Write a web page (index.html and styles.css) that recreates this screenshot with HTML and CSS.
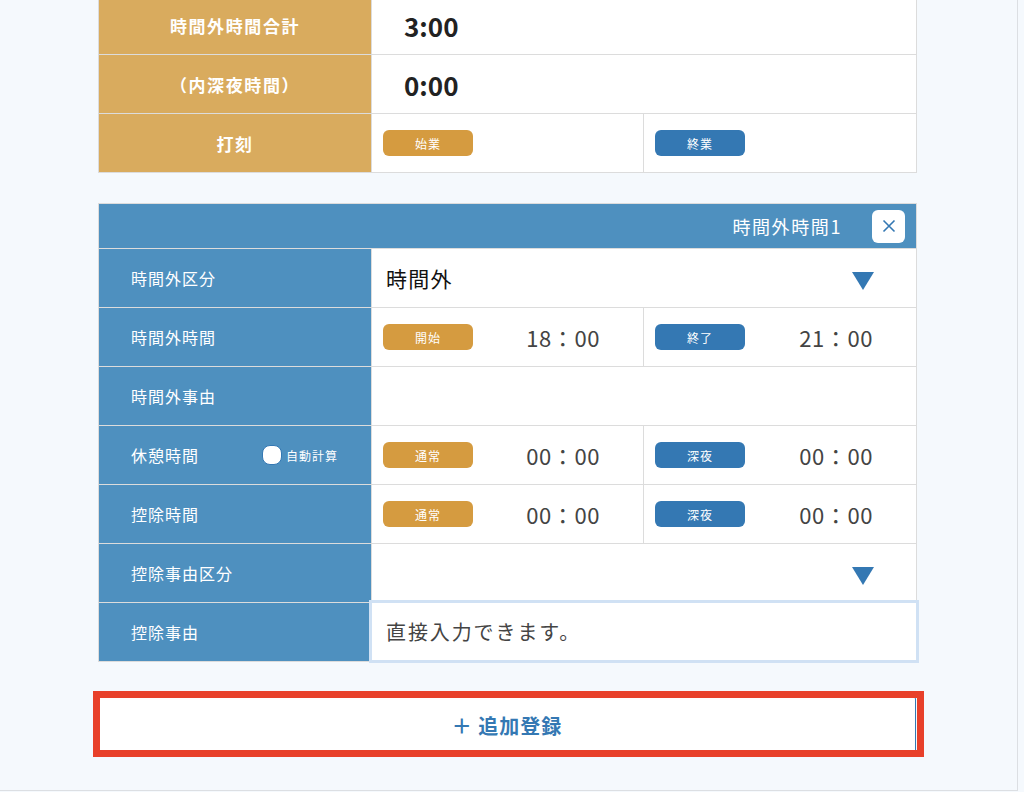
FILE: index.html
```html
<!DOCTYPE html>
<html lang="ja">
<head>
<meta charset="utf-8">
<title>時間外時間</title>
<link rel="stylesheet" href="styles.css">
</head>
<body>
<div class="page">
  <div class="sheet summary">
    <div class="lbl lbl-gold">時間外時間合計</div>
    <div class="cell total span2">3:00</div>
    <div class="lbl lbl-gold">（内深夜時間）</div>
    <div class="cell total span2">0:00</div>
    <div class="lbl lbl-gold">打刻</div>
    <div class="cell"><span class="tag tag-gold">始業</span></div>
    <div class="cell"><span class="tag tag-blue">終業</span></div>
  </div>

  <div class="sheet detail">
    <div class="head span3">
      <span class="head-title">時間外時間1</span>
      <button class="close" type="button" aria-label="閉じる">
        <svg width="14" height="14" viewBox="0 0 14 14"><path d="M1.5 1.5 L12.5 12.5 M12.5 1.5 L1.5 12.5" stroke="#3478b3" stroke-width="1.6" fill="none"/></svg>
      </button>
    </div>

    <div class="lbl lbl-blue">時間外区分</div>
    <div class="cell select span2"><span class="select-text">時間外</span><span class="tri"></span></div>

    <div class="lbl lbl-blue">時間外時間</div>
    <div class="cell"><span class="tag tag-gold">開始</span><span class="time">18：00</span></div>
    <div class="cell"><span class="tag tag-blue">終了</span><span class="time">21：00</span></div>

    <div class="lbl lbl-blue">時間外事由</div>
    <div class="cell span2"></div>

    <div class="lbl lbl-blue lbl-split"><span>休憩時間</span><span class="auto"><span class="toggle"></span>自動計算</span></div>
    <div class="cell"><span class="tag tag-gold">通常</span><span class="time">00：00</span></div>
    <div class="cell"><span class="tag tag-blue">深夜</span><span class="time">00：00</span></div>

    <div class="lbl lbl-blue">控除時間</div>
    <div class="cell"><span class="tag tag-gold">通常</span><span class="time">00：00</span></div>
    <div class="cell"><span class="tag tag-blue">深夜</span><span class="time">00：00</span></div>

    <div class="lbl lbl-blue">控除事由区分</div>
    <div class="cell select span2"><span class="select-text"></span><span class="tri"></span></div>

    <div class="lbl lbl-blue">控除事由</div>
    <div class="cell input-cell span2"><input class="reason" type="text" placeholder="直接入力できます。"></div>
  </div>

  <div class="add-wrap">
    <button class="add" type="button">＋ 追加登録</button>
  </div>
</div>
</body>
</html>
```

FILE: styles.css
```css
* { box-sizing: border-box; }

html, body {
  margin: 0;
  padding: 0;
  background: #f5f9fd;
  font-family: "Noto Sans CJK JP", "Noto Sans", sans-serif;
}

.page {
  width: 1018px;
  height: 791px;
  border-right: 1px solid #dcdfe3;
  border-bottom: 1px solid #dcdfe3;
  padding: 0 100px 0 98px;
  overflow: hidden;
}

.sheet {
  display: grid;
  grid-template-columns: 272px 271px 1fr;
  gap: 1px;
  background: #dcdcdc;
  border: 1px solid #dcdcdc;
  width: 819px;
}

.summary {
  margin-top: -5px;
  grid-auto-rows: 58px;
}

.detail {
  margin-top: 30px;
  grid-template-rows: 44px;
  grid-auto-rows: 58px;
}

.span2 { grid-column: span 2; }
.span3 { grid-column: span 3; }

.lbl {
  display: flex;
  align-items: center;
  color: #fff;
}

.lbl-gold {
  background: #d9ab5e;
  justify-content: center;
  font-size: 17px;
  font-weight: 700;
  letter-spacing: 1.6px;
}

.lbl-blue {
  background: #4e90bf;
  padding-left: 32px;
  font-size: 16px;
  letter-spacing: 1px;
}

.lbl-split {
  justify-content: space-between;
  padding-right: 33px;
}

.auto {
  display: flex;
  align-items: center;
  font-size: 12px;
  letter-spacing: 1px;
}

.toggle {
  width: 20px;
  height: 20px;
  border-radius: 8px;
  background: #fff;
  border: 1px solid #3478b3;
  margin-right: 4px;
}

.cell {
  background: #fff;
  display: flex;
  align-items: center;
  padding-left: 11px;
  padding-right: 43px;
}

.total {
  padding-left: 32px;
  font-size: 26px;
  font-weight: 700;
  color: #222;
}

.tag {
  display: inline-flex;
  align-items: center;
  justify-content: center;
  width: 90px;
  height: 26px;
  border-radius: 6px;
  color: #fff;
  font-size: 12px;
  letter-spacing: 1px;
  flex: none;
}

.tag-gold { background: #d59b40; }
.tag-blue { background: #3478b3; }

.time {
  margin-left: auto;
  font-size: 22px;
  color: #444;
  letter-spacing: 0.6px;
}

.head {
  background: #4e90bf;
  display: flex;
  align-items: center;
  justify-content: flex-end;
  padding-right: 11px;
}

.head-title {
  color: #fff;
  font-size: 18px;
  letter-spacing: 1.6px;
  margin-right: 30px;
}

.close {
  width: 33px;
  height: 33px;
  border: none;
  border-radius: 6px;
  background: #fff;
  display: flex;
  align-items: center;
  justify-content: center;
  padding: 0;
}

.select {
  padding-left: 14px;
  padding-right: 42px;
}

.select-text {
  font-size: 21px;
  color: #111;
  letter-spacing: 1.2px;
}

.tri {
  margin-left: auto;
  margin-top: 5px;
  width: 0;
  height: 0;
  border-left: 11px solid transparent;
  border-right: 11px solid transparent;
  border-top: 18px solid #3478b3;
}

.input-cell {
  padding: 0;
  position: relative;
}

.reason {
  position: absolute;
  left: -3px;
  top: -3px;
  width: calc(100% + 6px);
  height: calc(100% + 5px);
  border: 3px solid #d0e1f4;
  background: #fff;
  padding: 0 0 0 14px;
  font-family: "Noto Sans CJK JP", "Noto Sans", sans-serif;
  font-size: 20px;
  letter-spacing: 1.9px;
  color: #444;
  outline: none;
}

.reason::placeholder { color: #444; }

.add-wrap {
  margin-top: 34px;
  width: 818px;
  position: relative;
}

.add-wrap::after {
  content: "";
  position: absolute;
  left: -5px;
  top: -5px;
  right: -8px;
  bottom: -3px;
  border: 7px solid #e8402a;
  pointer-events: none;
}

.add {
  display: block;
  width: 100%;
  height: 58px;
  background: #fff;
  border: 1px solid #3478b3;
  border-radius: 3px;
  box-shadow: 0 3px 0 #3478b3;
  color: #3478b3;
  font-family: "Noto Sans CJK JP", "Noto Sans", sans-serif;
  font-size: 20px;
  font-weight: 700;
  letter-spacing: 1px;
  padding: 0;
}
```
